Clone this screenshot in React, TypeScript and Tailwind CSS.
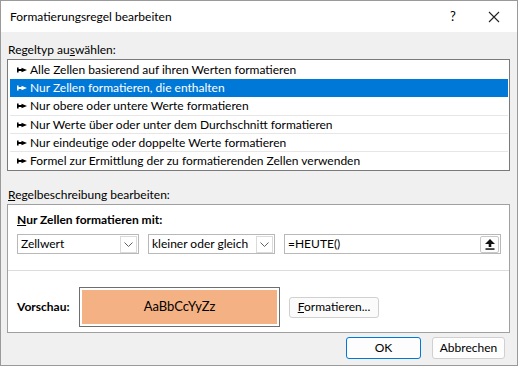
import React from 'react'

const rules = [
  'Alle Zellen basierend auf ihren Werten formatieren',
  'Nur Zellen formatieren, die enthalten',
  'Nur obere oder untere Werte formatieren',
  'Nur Werte über oder unter dem Durchschnitt formatieren',
  'Nur eindeutige oder doppelte Werte formatieren',
  'Formel zur Ermittlung der zu formatierenden Zellen verwenden',
]

function RuleArrow() {
  return (
    <svg width="10" height="6" viewBox="0 0 10 6" className="shrink-0" fill="currentColor">
      <rect x="0" y="0.5" width="1.6" height="5" />
      <polygon points="0,2.1 4.5,2.1 4.5,0.8 10,3 4.5,5.2 4.5,3.9 0,3.9" />
    </svg>
  )
}

function Chevron() {
  return (
    <span className="flex h-[17px] w-[17px] items-center justify-center border border-[#dadada] bg-white">
      <svg width="9" height="5" viewBox="0 0 9 5" fill="none" stroke="#606060" strokeWidth="1">
        <path d="M0.5 0.5 L4.5 4.5 L8.5 0.5" />
      </svg>
    </span>
  )
}

function Select({ label, width }: { label: string; width: string }) {
  return (
    <div className={`flex h-[20px] items-center justify-between whitespace-nowrap border border-[#b8b8b8] bg-white pl-[3px] pr-[1px] ${width}`}>
      <span>{label}</span>
      <Chevron />
    </div>
  )
}

export default function App() {
  return (
    <div
      className="flex h-[366px] w-[518px] flex-col border border-[#9a9a9a] bg-[#f0f0f0] text-[12px] text-black"
      style={{ fontFamily: '"Segoe UI", Lato, "Noto Sans", sans-serif' }}
    >
      <div className="flex h-[31px] shrink-0 items-center bg-white pl-[9px]">
        <span className="flex-1">Formatierungsregel bearbeiten</span>
        <span className="w-[14px] text-center text-[13px]">?</span>
        <svg width="12" height="12" viewBox="0 0 12 12" className="ml-[28px] mr-[17px]" stroke="#222" strokeWidth="1.1">
          <path d="M1 1 L11 11 M11 1 L1 11" />
        </svg>
      </div>

      <div className="flex flex-1 flex-col pl-[6px] pr-[7px]">
        <div className="mt-[9px] h-[17px] pl-[1px] leading-[17px]">
          Regeltyp au<u>s</u>wählen:
        </div>
        <div className="mt-[1px] flex h-[112px] flex-col border border-[#7a7a7a] bg-white p-[1px] pl-[2px]">
          {rules.map((r, i) => (
            <div
              key={r}
              className={`flex h-[18px] items-center gap-[3px] whitespace-nowrap pl-[7px] ${i === 1 ? 'bg-[#0078d7] text-white' : ''} ${i >= 3 ? 'border-t border-[#e6e6e6]' : ''}`}
            >
              <RuleArrow />
              <span>{r}</span>
            </div>
          ))}
        </div>

        <div className="mt-[15px] h-[17px] pl-[1px] leading-[17px]">
          <u>R</u>egelbeschreibung bearbeiten:
        </div>
        <div className="mt-[1px] flex h-[129px] flex-col border border-[#a0a0a0] bg-white">
          <div className="mt-[7px] pl-[9px] font-bold leading-[16px]">
            <u>N</u>ur Zellen formatieren mit:
          </div>
          <div className="mt-[6px] flex items-center pl-[9px]">
            <Select label="Zellwert" width="w-[122px]" />
            <div className="ml-[9px]">
              <Select label="kleiner oder gleich" width="w-[127px]" />
            </div>
            <div className="ml-[9px] flex h-[20px] w-[217px] items-center justify-between border border-[#b8b8b8] bg-white pl-[3px] pr-[1px]">
              <span>=HEUTE()</span>
              <span className="flex h-[17px] w-[19px] items-center justify-center rounded-[2px] border border-[#c8c8c8] bg-[#fdfdfd]">
                <svg width="10" height="11" viewBox="0 0 10 11" fill="#111">
                  <polygon points="5,0 10,5 6.3,5 6.3,8 3.7,8 3.7,5 0,5" />
                  <rect x="0.5" y="9.3" width="9" height="1.5" />
                </svg>
              </span>
            </div>
          </div>
          <div className="mt-[16px] border-t border-[#dcdcdc]" />
          <div className="mt-[16px] flex items-center pl-[9px]">
            <span className="w-[62px] font-bold">Vorschau:</span>
            <div className="h-[40px] w-[201px] border border-[#6e6e6e] bg-white p-[2px]">
              <div className="flex h-full items-center justify-center bg-[#f4b183] text-[13px]">AaBbCcYyZz</div>
            </div>
            <div className="ml-[9px] flex h-[21px] w-[90px] items-center justify-center rounded-[3px] border border-[#d0d0d0] bg-[#fbfbfb]">
              <span>
                <u>F</u>ormatieren...
              </span>
            </div>
          </div>
        </div>

        <div className="mt-[4px] flex justify-end pr-[5px]">
          <div className="flex h-[22px] w-[75px] items-center justify-center rounded-[3px] border border-[#0078d7] bg-[#fdfdfd]">
            OK
          </div>
          <div className="ml-[11px] flex h-[22px] w-[73px] items-center justify-center rounded-[3px] border border-[#d0d0d0] bg-[#fdfdfd]">
            Abbrechen
          </div>
        </div>
      </div>
    </div>
  )
}
